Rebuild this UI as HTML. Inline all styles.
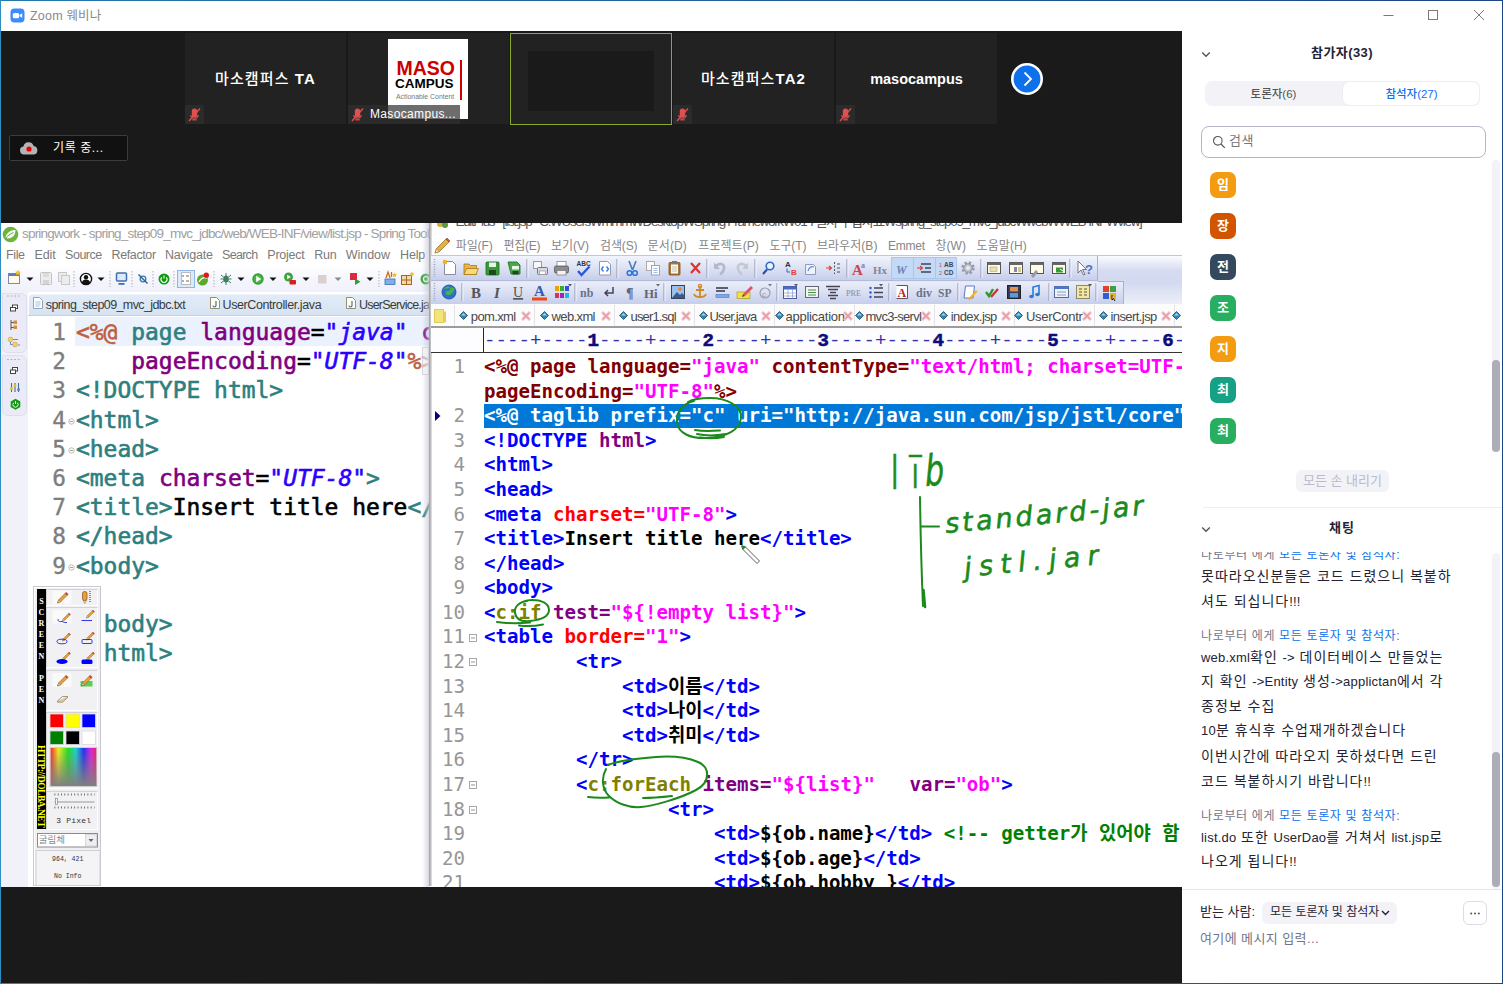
<!DOCTYPE html>
<html lang="ko">
<head>
<meta charset="utf-8">
<title>Zoom 웨비나</title>
<style>
*{box-sizing:border-box;margin:0;padding:0}
html,body{width:1503px;height:984px;overflow:hidden;background:#fff}
body{position:relative;font-family:"Liberation Sans","Noto Sans CJK KR",sans-serif;color:#232333}
.abs{position:absolute}
.nw{white-space:nowrap}
#win{position:absolute;left:0;top:0;width:1503px;height:984px;background:#fff;overflow:hidden}
#bt{position:absolute;left:0;top:0;width:1503px;height:1px;background:linear-gradient(90deg,#2378b0,#1c4585);z-index:50}
#bl{position:absolute;left:0;top:0;width:1px;height:984px;background:#2e8ec4;z-index:50}
#br{position:absolute;left:1502px;top:0;width:1px;height:984px;background:#1c4585;z-index:50}
#bb{position:absolute;left:0;top:983px;width:1503px;height:1px;background:linear-gradient(90deg,#2a88b8,#1c4a86);z-index:50}
#title{position:absolute;left:1px;top:1px;width:1501px;height:30px;background:#fff}
#title .t{position:absolute;left:29px;top:5.700px;font-size:12.5px;line-height:18px;color:#8a8a8a;white-space:nowrap;letter-spacing:.2px}
#main{position:absolute;left:1px;top:31px;width:1181px;height:953px;background:#1a1a1a;overflow:hidden}
.tile{position:absolute;top:2px;height:91px;width:161px;background:#222222;overflow:hidden}
.tile .nm .k{font-weight:500}
.tile .nm{position:absolute;left:0;right:0;top:35px;text-align:center;color:#fff;font-weight:bold;font-size:15px;line-height:22px;white-space:nowrap}
.mute{position:absolute;left:0;bottom:0;width:19px;height:19px}

#side{position:absolute;left:1182px;top:31px;width:320px;height:952px;background:#fff;overflow:hidden}
#side .hd{position:absolute;left:0;width:320px;text-align:center;font-weight:bold;font-size:13px;line-height:18px;color:#232333;white-space:nowrap;letter-spacing:.4px}
.seg{position:absolute;left:23px;top:50px;width:275px;height:25px;background:#f2f2f7;border-radius:7px}
.seg .on{position:absolute;left:138px;top:1px;width:136px;height:23px;background:#fff;border-radius:6px;box-shadow:0 0 2px rgba(0,0,0,.08)}
.seg span{position:absolute;top:5px;font-weight:500;width:137px;text-align:center;font-size:11.500px;line-height:17px;white-space:nowrap}
.srch{position:absolute;left:19px;top:95px;width:285px;height:32px;border:1px solid #b4b4c6;border-radius:8px;background:#fff}
.av{position:absolute;left:28px;margin-top:-.3px;width:26px;height:26px;border-radius:7px;color:#fff;font-weight:bold;font-size:13px;line-height:25px;text-align:center}
.chat{position:absolute;left:19px;font-size:13px;line-height:25px;color:#232333;white-space:nowrap;word-spacing:.9px;letter-spacing:.2px}
.chat i{font-style:normal;font-size:14px;letter-spacing:1px;word-spacing:0}
.chat.h{font-size:12px;color:#747487;letter-spacing:.65px;word-spacing:0;margin-top:2.500px}
.chat.h b{font-weight:normal;color:#0e71eb}

#share{position:absolute;left:1px;top:222.600px;width:1181px;height:664.200px;overflow:hidden;background:#fff}
#sw{position:absolute;left:-1px;top:-222.600px;width:1503px;height:984px}
#ecl{position:absolute;left:1px;top:222px;width:429px;height:666px;background:#fff;overflow:hidden}
#eclw{position:absolute;left:-1px;top:-222px;width:1503px;height:984px;font-family:"Liberation Sans",sans-serif}
.etitle{position:absolute;left:22px;top:225px;font-size:13.500px;line-height:18px;color:#a0a0a0;white-space:nowrap;letter-spacing:-.35px}
.emenu{position:absolute;top:246px;font-size:12.500px;line-height:18px;color:#7a7a7a;white-space:nowrap;letter-spacing:-.3px}
.etab{position:absolute;top:296px;font-size:12.500px;line-height:18px;color:#3a3a3a;white-space:nowrap;letter-spacing:-.45px}
.ecode{position:absolute;left:76px;font-family:"DejaVu Sans Mono","Liberation Mono",monospace;font-size:22.950px;line-height:29px;white-space:pre;color:#000;-webkit-text-stroke:.6px}
.eln{position:absolute;left:27px;width:39px;-webkit-text-stroke:.35px;text-align:right;font-family:"DejaVu Sans Mono","Liberation Mono",monospace;font-size:22.750px;line-height:29px;color:#7d7d7d}
.ecode .d{color:#bf5f3f}.ecode .t{color:#2e7f80}.ecode .a{color:#7f007f}.ecode .s{color:#2a00ff;font-style:italic}

#pen{position:absolute;left:32.700px;top:586px;width:68px;height:300px;background:#f0eff1;border:1px solid #c9c9cf;box-shadow:inset 1px 1px 0 #fff}
#pen .v{position:absolute;left:3px;width:9.500px;text-align:center;font-family:"Liberation Serif",serif;font-weight:bold;font-size:8px;line-height:10px;color:#fff}
#pen .sec{position:absolute;left:12.500px;width:52px;border:1px solid #d2d2d8;border-right-color:#fff;border-bottom-color:#fff;background:#f1f0f2}
#pen .tiny{position:absolute;font-family:"Liberation Mono",monospace;font-size:7px;line-height:9px;color:#333;white-space:nowrap;text-align:center}

#ep{position:absolute;left:429px;top:222px;width:753px;height:666px;background:#fff;overflow:hidden}
#epw{position:absolute;left:-429px;top:-222px;width:1503px;height:984px;font-family:"Liberation Sans","Noto Sans CJK KR",sans-serif}
.pmenu{position:absolute;top:237.200px;font-size:12px;line-height:18px;color:#868686;white-space:nowrap}
.ptab{position:absolute;top:307.800px;font-size:13px;line-height:18px;color:#484848;white-space:nowrap;letter-spacing:-.35px}
.pcode{position:absolute;left:484px;font-family:"DejaVu Sans Mono","Liberation Mono","Noto Sans CJK KR",monospace;font-weight:bold;font-size:19.100px;line-height:24px;white-space:pre;color:#000}
.pcode i{font-style:normal;font-family:"Noto Sans CJK KR",sans-serif;font-size:18.750px;letter-spacing:0;line-height:0}
.pln{position:absolute;left:432px;width:33px;text-align:right;font-family:"DejaVu Sans Mono","Liberation Mono",monospace;font-size:19.100px;line-height:24px;color:#969696}
.pcode .j{color:#800000}.pcode .s{color:#ff00ff}.pcode .t{color:#0000ff}.pcode .r{color:#ff0000}.pcode .p{color:#800080}.pcode .o{color:#808000}.pcode .g{color:#008000}
.pcode.sel,.pcode.sel span{color:#fff}
.rul b{color:#0c0c7c;-webkit-text-stroke:.5px}
.tbi{font-family:"Liberation Serif",serif;font-weight:bold;fill:#555}
</style>
</head>
<body>
<div id="win">
<div id="title">
  <svg class="abs" style="left:8.700px;top:6.700px" width="15" height="15" viewBox="0 0 16 16"><rect x="0.500" y="0.500" width="15" height="15" rx="4.200" fill="#3d8bfd"/><rect x="3" y="5.200" width="6.800" height="5.600" rx="1.600" fill="#fff"/><path d="M10.400 7.200 L13 5.600 V10.400 L10.400 8.800Z" fill="#fff"/></svg>
  <div class="t">Zoom 웨비나</div>
  <svg class="abs" style="left:1375px;top:0" width="126" height="30" viewBox="0 0 126 30"><g stroke="#7a7a7a" stroke-width="1" fill="none"><path d="M7.500 14.500H17.500"/><rect x="52.500" y="9.500" width="9" height="9"/><path d="M98 9L108 19M108 9L98 19"/></g></svg>
</div>
<div id="main">
  <div class="tile" style="left:184px"><div class="nm" style="letter-spacing:1.100px"><span class="k">마소캠퍼스</span> TA</div><svg class="mute" width="19" height="19" viewBox="0 0 19 19"><rect width="19" height="19" fill="#2b2b2b"/><rect x="6.800" y="3.500" width="5.400" height="9" rx="2.700" fill="#e0504e"/><path d="M5.6 10.2c.4 2 2 3 3.900 3s3.500-1 3.900-3" stroke="#e0504e" stroke-width="1.100" fill="none"/><rect x="7.200" y="14.200" width="4.600" height="1.200" fill="#e0504e"/><path d="M4 16L15 3.500" stroke="#e0504e" stroke-width="1.300"/></svg></div>
  <div class="tile" style="left:347px">
    <div class="abs" style="left:40px;top:6px;width:80px;height:80px;background:#fff">
      <div class="abs" style="left:8.500px;top:18px;font:bold 19.500px/22px 'Liberation Sans',sans-serif;color:#cc0000;letter-spacing:0">MASO</div>
      <div class="abs" style="left:7px;top:37.300px;font:bold 13.500px/16px 'Liberation Sans',sans-serif;color:#000">CAMPUS</div>
      <div class="abs nw" style="left:8px;top:52.500px;font:6.900px/9px 'Liberation Sans',sans-serif;color:#777">Actionable Content</div>
      <div class="abs" style="left:72px;top:21px;width:2px;height:40px;background:#cc0000"></div>
    </div>
    <div class="abs" style="left:0;top:72px;width:112px;height:19px;background:rgba(47,47,47,.7)"></div>
    <svg class="mute" width="19" height="19" viewBox="0 0 19 19"><rect x="6.800" y="3.500" width="5.400" height="9" rx="2.700" fill="#e0504e"/><path d="M5.6 10.2c.4 2 2 3 3.900 3s3.500-1 3.900-3" stroke="#e0504e" stroke-width="1.100" fill="none"/><rect x="7.200" y="14.200" width="4.600" height="1.200" fill="#e0504e"/><path d="M4 16L15 3.500" stroke="#e0504e" stroke-width="1.300"/></svg>
    <div class="abs nw" style="left:22px;top:74px;font-size:12px;line-height:15px;color:#fff;letter-spacing:.35px">Masocampus...</div>
  </div>
  <div class="tile" style="left:509px;width:162px;height:92px;top:2px;border:1px solid #8aa82f"><div class="abs" style="left:17px;top:17px;width:126px;height:60px;background:#1a1a1a"></div></div>
  <div class="tile" style="left:672px"><div class="nm" style="letter-spacing:1.100px"><span class="k">마소캠퍼스</span>TA2</div><svg class="mute" width="19" height="19" viewBox="0 0 19 19"><rect width="19" height="19" fill="#2b2b2b"/><rect x="6.800" y="3.500" width="5.400" height="9" rx="2.700" fill="#e0504e"/><path d="M5.6 10.2c.4 2 2 3 3.900 3s3.500-1 3.900-3" stroke="#e0504e" stroke-width="1.100" fill="none"/><rect x="7.200" y="14.200" width="4.600" height="1.200" fill="#e0504e"/><path d="M4 16L15 3.500" stroke="#e0504e" stroke-width="1.300"/></svg></div>
  <div class="tile" style="left:835px"><div class="nm" style="font-size:14.500px">masocampus</div><svg class="mute" width="19" height="19" viewBox="0 0 19 19"><rect width="19" height="19" fill="#2b2b2b"/><rect x="6.800" y="3.500" width="5.400" height="9" rx="2.700" fill="#e0504e"/><path d="M5.6 10.2c.4 2 2 3 3.900 3s3.500-1 3.900-3" stroke="#e0504e" stroke-width="1.100" fill="none"/><rect x="7.200" y="14.200" width="4.600" height="1.200" fill="#e0504e"/><path d="M4 16L15 3.500" stroke="#e0504e" stroke-width="1.300"/></svg></div>
  <svg class="abs" style="left:1009px;top:30.700px" width="34" height="34" viewBox="0 0 34 34"><circle cx="17" cy="17" r="14.700" fill="#0e71eb" stroke="#fff" stroke-width="2.600"/><path d="M14.500 10.500L21 17L14.500 23.500" stroke="#fff" stroke-width="1.800" fill="none"/></svg>
  <div class="abs" style="left:8px;top:104px;width:119px;height:26px;border:1px solid #3c3c3c;border-radius:2px;background:#111">
    <svg class="abs" style="left:9px;top:4px" width="20" height="16" viewBox="0 0 20 16"><path d="M5 14.500a4 4 0 0 1-.6-7.950a5.300 5.300 0 0 1 10.300-.5a4.300 4.300 0 0 1 .3 8.450z" fill="#b4b4b4"/><circle cx="10" cy="9" r="2.600" fill="#e00"/></svg>
    <div class="abs nw" style="left:43px;top:4px;font-size:12px;line-height:16px;color:#fff;letter-spacing:.6px">기록 중...</div>
  </div>
</div>
<div id="share"><div id="sw">
<div id="ecl"><div id="eclw">
<svg class="abs" style="left:2px;top:226px" width="18" height="17" viewBox="0 0 18 17"><circle cx="8.500" cy="8.500" r="7.800" fill="#6db33f"/><path d="M3.500 11.500c1-5 5-7.500 10-7.500c0 4.500-2.500 8.500-8 8.500" fill="#fff" opacity=".92"/><path d="M3 13c2.500-3 5-5 8.500-6.500" stroke="#6db33f" stroke-width="1" fill="none"/></svg><div class="etitle" style="letter-spacing:-0.802px">springwork - spring_step09_mvc_jdbc/web/WEB-INF/view/list.jsp - Spring Tool Suite 4</div>
<div class="emenu" style="left:6.1px;letter-spacing:-0.389px">File</div><div class="emenu" style="left:34.5px;letter-spacing:-0.087px">Edit</div><div class="emenu" style="left:65.1px;letter-spacing:-0.502px">Source</div><div class="emenu" style="left:111.5px;letter-spacing:-0.381px">Refactor</div><div class="emenu" style="left:165.0px;letter-spacing:-0.205px">Navigate</div><div class="emenu" style="left:222.0px;letter-spacing:-0.702px">Search</div><div class="emenu" style="left:267.3px;letter-spacing:-0.229px">Project</div><div class="emenu" style="left:314.2px;letter-spacing:-0.146px">Run</div><div class="emenu" style="left:345.8px;letter-spacing:-0.045px">Window</div><div class="emenu" style="left:400.0px;letter-spacing:-0.130px">Help</div>
<div class="abs" style="left:1px;top:265px;width:429px;height:27px;background:linear-gradient(#ffffff,#f4f5fc 60%,#eff0fa)"></div>
<svg class="abs" style="left:0;top:267px" width="430" height="26" viewBox="0 266 430 26"><rect x="8.500" y="272.500" width="11" height="10" fill="#fffbe8" stroke="#7a8aa8"/><rect x="8.500" y="272.500" width="11" height="2.500" fill="#5a7fc0"/><path d="M18 268.500l1 2 2 .3-1.500 1.400.4 2-1.900-1-1.900 1 .4-2-1.500-1.400 2-.3z" fill="#f5c518"/><path d="M26.5 276.5h7l-3.500 3.500z" fill="#111"/><rect x="40.500" y="271.500" width="11" height="12" rx="1" fill="#ececec" stroke="#c4c4c4"/><rect x="43" y="272" width="6" height="4" fill="#dcdcdc"/><rect x="43" y="279" width="6" height="4" fill="#d4d4d4"/><rect x="58.500" y="271.500" width="8" height="9" fill="#ececec" stroke="#c8c8c8"/><rect x="61.500" y="274.500" width="8" height="9" fill="#ececec" stroke="#c8c8c8"/><path d="M74.0 270v16" stroke="#b8bcc8" stroke-width="1.200" stroke-dasharray="1.500 1.500"/><circle cx="86" cy="278" r="5.600" fill="#fff" stroke="#111" stroke-width="1.400"/><circle cx="86" cy="276.300" r="2.200" fill="#111"/><path d="M81.800 281.800a4.300 4.300 0 0 1 8.400 0a5.600 5.600 0 0 1-8.400 0z" fill="#111"/><path d="M97.5 276.5h7l-3.500 3.500z" fill="#111"/><path d="M110.0 270v16" stroke="#b8bcc8" stroke-width="1.200" stroke-dasharray="1.500 1.500"/><rect x="116.500" y="272" width="10" height="8" rx="1" fill="#dfe9f7" stroke="#3f6fb0" stroke-width="1.500"/><rect x="118.500" y="282" width="6" height="1.800" fill="#3f6fb0"/><path d="M132.0 270v16" stroke="#b8bcc8" stroke-width="1.200" stroke-dasharray="1.500 1.500"/><circle cx="143" cy="278" r="2.800" fill="none" stroke="#3a7ab0" stroke-width="1.300"/><path d="M138.500 273.500l9 9" stroke="#2d6290" stroke-width="1.400"/><path d="M153.0 270v16" stroke="#b8bcc8" stroke-width="1.200" stroke-dasharray="1.500 1.500"/><circle cx="164" cy="278" r="5.500" fill="#119a11"/><path d="M161.800 276.300a3 3 0 1 0 4.400 0M164 274.500v3" stroke="#e8ffe8" stroke-width="1.100" fill="none"/><path d="M174.0 270v16" stroke="#b8bcc8" stroke-width="1.200" stroke-dasharray="1.500 1.500"/><rect x="177.500" y="269.500" width="17" height="17" fill="#dbe9fb" stroke="#8fb6ea"/><rect x="181.500" y="271.500" width="9" height="12" fill="#fff" stroke="#bbb"/><path d="M183 274v2M183 279v2M186 275h3M186 280h3" stroke="#555" stroke-width=".9"/><circle cx="202.500" cy="279" r="5.500" fill="#5aa82c"/><path d="M199 281c2-4 5-5 8-4" stroke="#fff" stroke-width="1.400" fill="none"/><circle cx="206.300" cy="274.300" r="2.700" fill="#e01818"/><path d="M214.0 270v16" stroke="#b8bcc8" stroke-width="1.200" stroke-dasharray="1.500 1.500"/><ellipse cx="226" cy="278" rx="2.600" ry="3.600" fill="#3f7f5f"/><path d="M221 274l10 8M231 274l-10 8M220.500 278h11M226 272v12" stroke="#3f7f5f" stroke-width="1"/><path d="M237.5 276.5h7l-3.500 3.500z" fill="#111"/><circle cx="258" cy="278" r="5.700" fill="#2c9a2c"/><circle cx="258" cy="278" r="4.600" fill="#46b546"/><path d="M256.200 274.800l5 3.200-5 3.200z" fill="#fff"/><path d="M269.5 276.5h7l-3.500 3.500z" fill="#111"/><circle cx="288.500" cy="276" r="4.500" fill="#3da53d"/><path d="M287.200 273.800l3.600 2.200-3.600 2.200z" fill="#fff"/><rect x="289.500" y="279" width="6.500" height="4.500" rx="1" fill="#d81e1e"/><path d="M302.5 276.5h7l-3.500 3.500z" fill="#111"/><rect x="318" y="274" width="8.500" height="8.500" fill="#dccfd2"/><path d="M334.5 276.5h7l-3.500 3.500z" fill="#8a8a8a"/><rect x="350" y="272" width="7" height="7" fill="#dc2a3c"/><path d="M355 277.500l5.500 3.200-5.500 3.200z" fill="#2aa12a"/><path d="M366.5 276.5h7l-3.500 3.500z" fill="#111"/><path d="M379.0 270v16" stroke="#b8bcc8" stroke-width="1.200" stroke-dasharray="1.500 1.500"/><rect x="385" y="278" width="10" height="5.500" fill="#7fb0e8" stroke="#3a6eb0" stroke-width=".8"/><path d="M386 277l2-6 2 6M391.500 271v5" stroke="#d26a1a" stroke-width="1.300" fill="none"/><path d="M394.500 271.500l.8 1.600 1.700.2-1.200 1.200.3 1.700-1.600-.8-1.600.8.300-1.700-1.200-1.200 1.700-.2z" fill="#f0c020"/><rect x="401.500" y="274.500" width="10" height="9" fill="#f1d9a8" stroke="#a8651e"/><path d="M401.500 279h10M406.500 274.500v9" stroke="#a8651e"/><path d="M412 270.500l.8 1.600 1.700.2-1.200 1.200.3 1.700-1.600-.8-1.600.8.300-1.700-1.200-1.200 1.700-.2z" fill="#f0c020"/><circle cx="426" cy="278" r="5.500" fill="#3faa3f"/><circle cx="426" cy="278" r="2.500" fill="none" stroke="#fff" stroke-width="1.200"/></svg>
<div class="abs" style="left:1px;top:291px;width:27px;height:596px;background:#f1f1fa"></div><div class="abs" style="left:2px;top:292.700px;width:24.500px;height:60.500px;background:#ebebf7;border:1px solid #dedeee;border-radius:0 6px 6px 6px"></div><div class="abs" style="left:2px;top:355px;width:24.500px;height:61px;background:#ebebf7;border:1px solid #dedeee;border-radius:0 6px 6px 6px"></div><svg class="abs" style="left:2px;top:292px" width="25" height="125" viewBox="2 292 25 125"><path d="M7 296.0h14" stroke="#b0b0bc" stroke-width="1.200" stroke-dasharray="1.800 1.800"/><path d="M7 359.5h14" stroke="#b0b0bc" stroke-width="1.200" stroke-dasharray="1.800 1.800"/><rect x="12.500" y="305.0" width="5" height="3.500" fill="#fff" stroke="#444" stroke-width="1"/><rect x="10.500" y="307.5" width="5" height="3.500" fill="#fff" stroke="#444" stroke-width="1"/><rect x="12.500" y="367.5" width="5" height="3.500" fill="#fff" stroke="#444" stroke-width="1"/><rect x="10.500" y="370.0" width="5" height="3.500" fill="#fff" stroke="#444" stroke-width="1"/><path d="M11 320v10M11 322.500h3M11 327.500h3" stroke="#555" stroke-width="1"/><rect x="13.500" y="320.500" width="3.500" height="3.500" fill="#d88a3a"/><rect x="13.500" y="325.500" width="3.500" height="3.500" fill="#d88a3a"/><circle cx="10.500" cy="339.500" r="2.400" fill="#f0d070" stroke="#c8a030" stroke-width=".6"/><circle cx="15" cy="344.500" r="2.400" fill="#f0d070" stroke="#c8a030" stroke-width=".6"/><path d="M13 339.500h5M18 345h2M10.500 342v2.500h2" stroke="#5a7fc0" stroke-width=".9" fill="none"/><path d="M11.500 383v9M15 383v9M18.500 383v9" stroke="#3a6ea5" stroke-width="1.100"/><circle cx="11.500" cy="388.500" r="1.500" fill="#e8b830"/><circle cx="15" cy="385.500" r="1.500" fill="#e8b830"/><circle cx="18.500" cy="389.500" r="1.500" fill="#4a8ad0"/><path d="M15.500 398.800l4.800 2.700v5.500l-4.800 2.700-4.800-2.700v-5.500z" fill="#129a12"/><path d="M13.700 402.700a2.600 2.600 0 1 0 3.600 0M15.500 401v3" stroke="#dfffdf" stroke-width="1" fill="none"/></svg>
<div class="abs" style="left:28.500px;top:293.500px;width:402px;height:21.500px;background:linear-gradient(#e2ecf7,#d6e3f2);border-top:1px solid #eef3fa;border-radius:4px 0 0 0"></div><div class="abs" style="left:28px;top:314.500px;width:402px;height:1px;background:#c4d2e4"></div><svg class="abs" style="left:33px;top:297px" width="10" height="12" viewBox="0 0 10 12"><path d="M.5.5h6l3 3v8h-9z" fill="#fafcff" stroke="#8a9ab8" stroke-width=".9"/><path d="M2.500 5h5M2.500 7h5M2.500 9h4" stroke="#9ab0d0" stroke-width=".8"/></svg><div class="etab" style="left:45.8px;letter-spacing:-0.602px">spring_step09_mvc_jdbc.txt</div><svg class="abs" style="left:209.5px;top:297px" width="10" height="12" viewBox="0 0 10 12"><path d="M.5.5h6l3 3v8h-9z" fill="#fffef2" stroke="#8a8460" stroke-width=".9"/><path d="M6 4v4.500a1.500 1.500 0 0 1-3 0" stroke="#3a5ea8" stroke-width="1.100" fill="none"/></svg><svg class="abs" style="left:345.5px;top:297px" width="10" height="12" viewBox="0 0 10 12"><path d="M.5.5h6l3 3v8h-9z" fill="#fffef2" stroke="#8a8460" stroke-width=".9"/><path d="M6 4v4.500a1.500 1.500 0 0 1-3 0" stroke="#3a5ea8" stroke-width="1.100" fill="none"/></svg><div class="etab" style="left:222.5px;letter-spacing:-0.400px">UserController.java</div><div class="etab" style="left:359.0px;letter-spacing:-0.792px">UserService.java</div>
<div class="abs" style="left:75px;top:317px;width:355px;height:28.500px;background:#ecf2fd"></div><div class="eln" style="top:317.50px">1</div><div class="ecode" style="top:317.50px"><span class="d">&lt;%@</span> <span class="t">page</span> <span class="a">language</span>=<span class="s">"java"</span> <span class="a">contentType</span></div><div class="eln" style="top:346.50px">2</div><div class="ecode" style="top:346.50px">    <span class="a">pageEncoding</span>=<span class="s">"UTF-8"</span><span class="d">%&gt;</span></div><div class="eln" style="top:375.50px">3</div><div class="ecode" style="top:375.50px"><span class="t">&lt;!DOCTYPE html&gt;</span></div><div class="eln" style="top:405.50px">4</div><div class="ecode" style="top:405.50px"><span class="t">&lt;html&gt;</span></div><div class="eln" style="top:434.50px">5</div><div class="ecode" style="top:434.50px"><span class="t">&lt;head&gt;</span></div><div class="eln" style="top:463.50px">6</div><div class="ecode" style="top:463.50px"><span class="t">&lt;meta</span> <span class="a">charset</span>=<span class="s">"UTF-8"</span><span class="t">&gt;</span></div><div class="eln" style="top:492.50px">7</div><div class="ecode" style="top:492.50px"><span class="t">&lt;title&gt;</span>Insert title here<span class="t">&lt;/title&gt;</span></div><div class="eln" style="top:521.50px">8</div><div class="ecode" style="top:521.50px"><span class="t">&lt;/head&gt;</span></div><div class="eln" style="top:551.50px">9</div><div class="ecode" style="top:551.50px"><span class="t">&lt;body&gt;</span></div><div class="ecode" style="top:609.50px"><span class="t"><span style="visibility:hidden">&lt;/</span>body&gt;</span></div><div class="ecode" style="top:638.50px"><span class="t"><span style="visibility:hidden">&lt;/</span>html&gt;</span></div><svg class="abs" style="left:68px;top:418.1px" width="7" height="7" viewBox="0 0 7 7"><circle cx="3.500" cy="3.500" r="2.700" fill="#fff" stroke="#a8a8a8" stroke-width=".8"/><path d="M2 3.500h3" stroke="#888" stroke-width=".8"/></svg><svg class="abs" style="left:68px;top:447.3px" width="7" height="7" viewBox="0 0 7 7"><circle cx="3.500" cy="3.500" r="2.700" fill="#fff" stroke="#a8a8a8" stroke-width=".8"/><path d="M2 3.500h3" stroke="#888" stroke-width=".8"/></svg><svg class="abs" style="left:68px;top:564.1px" width="7" height="7" viewBox="0 0 7 7"><circle cx="3.500" cy="3.500" r="2.700" fill="#fff" stroke="#a8a8a8" stroke-width=".8"/><path d="M2 3.500h3" stroke="#888" stroke-width=".8"/></svg>
<div class="abs" style="left:421.500px;top:222px;width:8px;height:666px;background:linear-gradient(90deg,rgba(205,205,225,0),rgba(196,196,216,.75))"></div><div class="abs" style="left:421.500px;top:346.500px;width:7.500px;height:28px;background:rgba(242,242,246,.55);border:1px solid rgba(200,200,214,.7)"></div></div></div>
<div id="ep"><div id="epw">
<div class="abs" style="left:429px;top:223px;width:2.500px;height:663px;background:linear-gradient(90deg,#9a9a9a,#c8c8c8 60%,#e4e4e4)"></div><div class="abs nw" style="left:455.500px;top:212.500px;font-size:13.500px;line-height:18px;color:#555;letter-spacing:-1.347px">EditPlus - [list.jsp - C:₩Users₩mmm₩Desktop₩Spring Framework₩01 7일차 수업자료₩spring_step09_mvc_jdbc₩web₩WEB-INF₩view]</div><svg class="abs" style="left:436px;top:222px" width="14" height="8" viewBox="0 0 14 8"><circle cx="4" cy="2" r="3" fill="#d8b030"/><circle cx="9" cy="3" r="3" fill="#5a9a3a"/></svg><svg class="abs" style="left:433px;top:237px" width="18" height="18" viewBox="0 0 18 18"><path d="M2 16l1.500-4.500 9.500-9.500 3 3-9.500 9.500z" fill="#e8b040" stroke="#8a6a20" stroke-width=".7"/><path d="M2 16l1.500-4.500 3 3z" fill="#f4dcb0" stroke="#8a6a20" stroke-width=".5"/><path d="M13 2l1-1 3 3-1 1z" fill="#d05050" stroke="#803030" stroke-width=".5"/></svg><div class="pmenu" style="left:455.8px;letter-spacing:-0.141px">파일(F)</div><div class="pmenu" style="left:503.5px;letter-spacing:-0.296px">편집(E)</div><div class="pmenu" style="left:550.9px;letter-spacing:0.024px">보기(V)</div><div class="pmenu" style="left:600.1px;letter-spacing:-0.176px">검색(S)</div><div class="pmenu" style="left:647.5px;letter-spacing:0.150px">문서(D)</div><div class="pmenu" style="left:698.3px;letter-spacing:0.047px">프로젝트(P)</div><div class="pmenu" style="left:769.5px;letter-spacing:-0.121px">도구(T)</div><div class="pmenu" style="left:816.9px;letter-spacing:0.061px">브라우저(B)</div><div class="pmenu" style="left:888.0px;letter-spacing:-0.223px">Emmet</div><div class="pmenu" style="left:935.5px;letter-spacing:0.010px">창(W)</div><div class="pmenu" style="left:976.5px;letter-spacing:0.103px">도움말(H)</div>
<div class="abs" style="left:431px;top:256px;width:751px;height:48px;background:linear-gradient(#fbfcff 0%,#d6dbf1 30%,#d3d9f0 55%,#eceff9 100%)"></div><div class="abs" style="left:431px;top:256px;width:667px;height:25px;background:linear-gradient(#f1f4fc,#dfe4f5 45%,#c6ceeb);border-right:1px solid #a9b1d2;border-bottom:1px solid #b4bbd8"></div><div class="abs" style="left:431px;top:281px;width:693px;height:23px;background:linear-gradient(#e9edf9,#dbe0f4 45%,#c6ceeb);border-right:1px solid #a9b1d2;border-top:1px solid #e4e8f6"></div><div class="abs" style="left:1098px;top:280.500px;width:26px;height:1px;background:#a9b1d2"></div><div class="abs" style="left:431px;top:255.300px;width:751px;height:1px;background:#c4c6d0"></div><div class="abs" style="left:431px;top:303.500px;width:751px;height:1px;background:#b9bdd0"></div><svg class="abs" style="left:431px;top:256px" width="751" height="48" viewBox="431 256 751 48"><path d="M434.500 259v18M434.500 283v18" stroke="#9aa0bc" stroke-width="1.500" stroke-dasharray="1 1.500"/><path d="M444.500 261.500h8l3 3v10h-11z" fill="#fff" stroke="#8a8a9a"/><circle cx="445" cy="262" r="2.300" fill="#f5b020"/><path d="M464 264h5l1.500 1.500h6v9h-12.500z" fill="#e8b54a" stroke="#a87818" stroke-width=".8"/><path d="M464 274.500l2.500-6h12l-2.500 6z" fill="#f8d878" stroke="#a87818" stroke-width=".8"/><rect x="486" y="262" width="13" height="13" rx="1" fill="#3a9a3a" stroke="#1f6a1f" stroke-width=".8"/><rect x="489" y="262.500" width="7" height="4.500" fill="#e8f4e8"/><rect x="489" y="270" width="7" height="5" fill="#1c4a1c"/><path d="M508 262h9l3 3v9h-9z" fill="#4aa84a" stroke="#1f6a1f" stroke-width=".8"/><rect x="512" y="266" width="7" height="3.500" fill="#e8f4e8"/><rect x="512.500" y="271" width="6" height="3.500" fill="#1c4a1c"/><path d="M527.0 259.0V278.0" stroke="#8d93ad" stroke-width="1"/><path d="M528.0 259.0V278.0" stroke="#f4f6ff" stroke-width="1"/><rect x="533.500" y="261.500" width="8" height="7" fill="#f8f8f8" stroke="#9a9aa8"/><rect x="537.500" y="267.500" width="10" height="7" rx="1" fill="#d8d8e0" stroke="#777"/><rect x="539.500" y="271" width="6" height="3.500" fill="#fff" stroke="#888" stroke-width=".6"/><rect x="557" y="261.500" width="9" height="5" fill="#fff" stroke="#888" stroke-width=".8"/><rect x="554.500" y="266" width="14" height="7" rx="1.500" fill="#8a8a92" stroke="#555" stroke-width=".8"/><rect x="557" y="270.500" width="9" height="4.500" fill="#f4f4f4" stroke="#777" stroke-width=".7"/><path d="M578 271l3.500 4 8-8.500" stroke="#2a5ad8" stroke-width="2.400" fill="none"/><text x="576.500" y="266" font-size="6.500" font-family="Liberation Sans" font-weight="bold" fill="#334">ABC</text><path d="M599.500 261.500h8l3 3v10.500h-11z" fill="#fff" stroke="#9a9aaa"/><path d="M603.500 266.500l-2 2.500 2 2.500M606.500 266.500l2 2.500-2 2.500" stroke="#2a7ae0" stroke-width="1.300" fill="none"/><path d="M617.0 259.0V278.0" stroke="#8d93ad" stroke-width="1"/><path d="M618.0 259.0V278.0" stroke="#f4f6ff" stroke-width="1"/><path d="M629 261l3.500 9M636 261l-3.500 9" stroke="#4a7ac0" stroke-width="1.600"/><circle cx="629.500" cy="273" r="2.300" fill="none" stroke="#2a78d8" stroke-width="1.600"/><circle cx="635" cy="273" r="2.300" fill="none" stroke="#2a78d8" stroke-width="1.600"/><rect x="646.500" y="261.500" width="8" height="9" fill="#fafafa" stroke="#aaa"/><rect x="651.500" y="265.500" width="8" height="9.500" fill="#fafcff" stroke="#9aa"/><path d="M653.500 268.500h4M653.500 270.500h4M653.500 272.500h4" stroke="#7aa0d8" stroke-width=".7"/><rect x="669" y="262.500" width="11" height="12.500" rx="1" fill="#b07838" stroke="#7a4a18" stroke-width=".8"/><rect x="671" y="264.500" width="7" height="9" fill="#fbfbf0"/><rect x="672" y="261" width="5" height="2.500" fill="#777"/><path d="M672 267h5M672 269h5M672 271h5" stroke="#9a9a8a" stroke-width=".6"/><path d="M691 263l9 10M700 263l-9 10" stroke="#e03030" stroke-width="2.200"/><path d="M707.0 259.0V278.0" stroke="#8d93ad" stroke-width="1"/><path d="M708.0 259.0V278.0" stroke="#f4f6ff" stroke-width="1"/><path d="M716 266c4-4 9-2 8 3c-.5 2.500-2 4-4 5.500" stroke="#b4b8c8" stroke-width="2.600" fill="none"/><path d="M714 262.500v6.500h6z" fill="#b4b8c8"/><path d="M746 266c-4-4-9-2-8 3c.5 2.500 2 4 4 5.500" stroke="#c4c8d4" stroke-width="2.600" fill="none"/><path d="M748 262.500v6.500h-6z" fill="#c4c8d4"/><path d="M755.0 259.0V278.0" stroke="#8d93ad" stroke-width="1"/><path d="M756.0 259.0V278.0" stroke="#f4f6ff" stroke-width="1"/><circle cx="770" cy="266" r="3.800" fill="#eaf3ff" stroke="#2a6ac8" stroke-width="1.600"/><path d="M767 269.500l-4 4.500" stroke="#2a4a98" stroke-width="2"/><text x="785" y="267" font-size="8" font-family="Liberation Sans" font-weight="bold" fill="#333">A</text><text x="791" y="275" font-size="8" font-family="Liberation Sans" font-weight="bold" fill="#e04030">B</text><path d="M787 268.500v3.500h3" stroke="#2a6ac8" stroke-width="1" fill="none"/><path d="M805.500 264.500h8l2 2v8h-10z" fill="#eef2fb" stroke="#8a9ac0"/><path d="M808 271c1-4 4-5 6-4" stroke="#6a8ad0" stroke-width="1.200" fill="none"/><path d="M826 268h5M829 266l2.500 2-2.500 2" stroke="#e04030" stroke-width="1.200" fill="none"/><path d="M834.500 262v12" stroke="#555" stroke-width="1" stroke-dasharray="2 1.500"/><path d="M837 264h3M837 268h3M837 272h3" stroke="#555" stroke-width="1"/><path d="M847.0 259.0V278.0" stroke="#8d93ad" stroke-width="1"/><path d="M848.0 259.0V278.0" stroke="#f4f6ff" stroke-width="1"/><text x="852" y="275" font-size="15" class="tbi" style="fill:#c84858">A</text><text x="861" y="268" font-size="8" class="tbi" style="fill:#8a7ab8">a</text><text x="873" y="274" font-size="11" class="tbi" style="fill:#8088a0">Hx</text><rect x="891.500" y="257.500" width="65" height="21" fill="#c3d9f6" stroke="#a9c6ee"/><path d="M913.500 258v20M935.500 258v20" stroke="#a9c6ee"/><text x="896" y="274" font-size="12" class="tbi" style="fill:#6a82b8;font-style:italic">W</text><path d="M921 264h10M925 268h6M921 272h10" stroke="#445" stroke-width="1.300"/><path d="M917 268h5M920 266l2.500 2-2.500 2" stroke="#e04030" stroke-width="1.100" fill="none"/><text x="944" y="267" font-size="6.500" font-family="Liberation Sans" font-weight="bold" fill="#445">AB</text><text x="944" y="274.500" font-size="6.500" font-family="Liberation Sans" font-weight="bold" fill="#445">CD</text><text x="939" y="267" font-size="5.500" font-family="Liberation Sans" fill="#e04030">1</text><text x="939" y="274.500" font-size="5.500" font-family="Liberation Sans" fill="#e04030">2</text><circle cx="968" cy="268" r="5.200" fill="none" stroke="#9a9eac" stroke-width="3" stroke-dasharray="2.300 1.800"/><circle cx="968" cy="268" r="4.200" fill="#c4c8d2" stroke="#8a8e9c" stroke-width="1"/><circle cx="968" cy="268" r="1.800" fill="#eef0f6"/><path d="M981.0 259.0V278.0" stroke="#8d93ad" stroke-width="1"/><path d="M982.0 259.0V278.0" stroke="#f4f6ff" stroke-width="1"/><rect x="987.500" y="262.500" width="13" height="11" fill="#fffbe6" stroke="#555" stroke-width="1"/><rect x="987.500" y="262.500" width="13" height="2.500" fill="#666"/><rect x="1009.500" y="262.500" width="13" height="11" fill="#fffbe6" stroke="#555" stroke-width="1"/><rect x="1009.500" y="262.500" width="13" height="2.500" fill="#666"/><rect x="1030.500" y="262.500" width="13" height="11" fill="#fffbe6" stroke="#555" stroke-width="1"/><rect x="1030.500" y="262.500" width="13" height="2.500" fill="#666"/><rect x="1052.500" y="262.500" width="13" height="11" fill="#fffbe6" stroke="#555" stroke-width="1"/><rect x="1052.500" y="262.500" width="13" height="2.500" fill="#666"/><rect x="990" y="267" width="7" height="4.500" fill="#e8e0b0" stroke="#998" stroke-width=".5"/><rect x="1014" y="267" width="3" height="5" fill="#88a" /><rect x="1018" y="267" width="3" height="5" fill="#cc8"/><path d="M1032 277l5-6" stroke="#99a" stroke-width="3"/><rect x="1056" y="267.500" width="7" height="5" fill="#3a9a3a"/><path d="M1060 269l3 2" stroke="#fff" stroke-width="1"/><path d="M1070.0 259.0V278.0" stroke="#8d93ad" stroke-width="1"/><path d="M1071.0 259.0V278.0" stroke="#f4f6ff" stroke-width="1"/><path d="M1078 261v12l3-3 2.500 5 1.500-.8-2.500-4.700h4z" fill="#fff" stroke="#556" stroke-width=".8"/><text x="1085" y="274" font-size="13" font-family="Liberation Sans" font-weight="bold" fill="#4a72c8">?</text><circle cx="449" cy="292" r="7" fill="#2a72d0"/><path d="M444 289c2-3 5-3 6-1s-1 3-3 3-2 3 0 4 5-1 6-3 2-3 2-5" fill="#4ab04a"/><circle cx="449" cy="292" r="7" fill="none" stroke="#1a4a98" stroke-width=".8"/><path d="M462.0 283.0V301.0" stroke="#8d93ad" stroke-width="1"/><path d="M463.0 283.0V301.0" stroke="#f4f6ff" stroke-width="1"/><text x="471" y="298" font-size="15" class="tbi">B</text><text x="494" y="298" font-size="15" class="tbi" style="font-style:italic">I</text><text x="513" y="297" font-size="14" class="tbi" style="font-weight:normal;text-decoration:underline">U</text><path d="M513 299h10" stroke="#555" stroke-width="1"/><text x="534" y="296" font-size="15" class="tbi" style="fill:#3a5ab0">A</text><rect x="532" y="297.500" width="15" height="3" fill="#f04810"/><rect x="555.0" y="286.0" width="4" height="5" fill="#f0a000"/><rect x="560.0" y="286.0" width="4" height="5" fill="#30b030"/><rect x="565.0" y="286.0" width="4" height="5" fill="#3050e0"/><rect x="555.0" y="293.0" width="4" height="5" fill="#e03060"/><rect x="560.0" y="293.0" width="4" height="5" fill="#a020c0"/><rect x="565.0" y="293.0" width="4" height="5" fill="#20b8e0"/><path d="M568 284h4l-2 2.500z" fill="#556"/><path d="M575.0 283.0V301.0" stroke="#8d93ad" stroke-width="1"/><path d="M576.0 283.0V301.0" stroke="#f4f6ff" stroke-width="1"/><text x="580" y="297" font-size="12" class="tbi" style="fill:#6a7288">nb</text><path d="M613 287v6h-8M608 290l-3 3 3 3" stroke="#445" stroke-width="1.500" fill="none"/><text x="626" y="298" font-size="14" class="tbi" style="fill:#667">¶</text><text x="644" y="298" font-size="13" class="tbi" style="fill:#667">Hi</text><path d="M656 284h4l-2 2.500z" fill="#667"/><path d="M664.0 283.0V301.0" stroke="#8d93ad" stroke-width="1"/><path d="M665.0 283.0V301.0" stroke="#f4f6ff" stroke-width="1"/><rect x="671.500" y="285.500" width="13" height="13" fill="#9ac0ee" stroke="#345" stroke-width="1"/><path d="M672 298l5-6 3 3 2-2 2.500 2.500v2.500z" fill="#3a5a8a"/><circle cx="680" cy="289" r="1.800" fill="#f08030"/><path d="M700 286v11M696 290h8M694 294c1 4 11 4 12 0" stroke="#d08a20" stroke-width="1.800" fill="none"/><circle cx="700" cy="286" r="1.600" fill="none" stroke="#d08a20" stroke-width="1.300"/><path d="M716 288h12M716 291h9" stroke="#334" stroke-width="1.500"/><rect x="716" y="294.500" width="13" height="3" fill="#7aa8e8" stroke="#4a78c0" stroke-width=".6"/><rect x="737" y="292" width="13" height="6.500" fill="#f4e040" stroke="#a89a20" stroke-width=".7"/><path d="M743 294l8-8 2 2-8 8z" fill="#e05070"/><path d="M743 294l-1 3 3-1z" fill="#543"/><circle cx="765" cy="293" r="5" fill="none" stroke="#9a9eac" stroke-width="1.200"/><text x="762" y="296.500" font-size="8" font-family="Liberation Sans" fill="#9a9eac">c</text><path d="M768 284h4l-2 2.500z" fill="#778"/><path d="M777.0 283.0V301.0" stroke="#8d93ad" stroke-width="1"/><path d="M778.0 283.0V301.0" stroke="#f4f6ff" stroke-width="1"/><rect x="783.500" y="286.500" width="13" height="12" fill="#fff" stroke="#4a5a98"/><rect x="783.500" y="286.500" width="13" height="3" fill="#4a6ac8"/><path d="M788 289v9.500M792.500 289v9.500M784 293h12.500M784 296h12.500" stroke="#8a9ac8" stroke-width=".7"/><path d="M794 284h4l-2 2.500z" fill="#556"/><rect x="805.500" y="286.500" width="13" height="11" fill="#f4f4f4" stroke="#667"/><path d="M808 290h8M808 292.500h8M808 295h8" stroke="#4a8a4a" stroke-width="1"/><path d="M826 286.500h14M828 289.500h10M830 292.500h6M828 295.500h10M830 298.500h6" stroke="#445" stroke-width="1.600"/><text x="846" y="296" font-size="7.500" class="tbi" style="fill:#9aa0b4">PRE</text><path d="M874 288h9M874 292.500h9M874 297h9" stroke="#445" stroke-width="1.300"/><circle cx="870.500" cy="288" r="1.200" fill="#2a5ac8"/><circle cx="870.500" cy="292.500" r="1.200" fill="#2a5ac8"/><circle cx="870.500" cy="297" r="1.200" fill="#2a5ac8"/><path d="M879 284h4l-2 2.500z" fill="#556"/><path d="M889.0 283.0V301.0" stroke="#8d93ad" stroke-width="1"/><path d="M890.0 283.0V301.0" stroke="#f4f6ff" stroke-width="1"/><path d="M896.500 285.500h11v13h-11" fill="#fff" stroke="#556" stroke-width="1"/><text x="897.500" y="297" font-size="12" class="tbi" style="fill:#c02020">A</text><text x="916" y="297" font-size="12" class="tbi" style="fill:#6a7288">div</text><text x="938" y="297" font-size="11.500" class="tbi" style="fill:#6a7288">SP</text><path d="M958.0 283.0V301.0" stroke="#8d93ad" stroke-width="1"/><path d="M959.0 283.0V301.0" stroke="#f4f6ff" stroke-width="1"/><path d="M965.500 286h9l-1.500 12h-9z" fill="#fff" stroke="#5a78c0" stroke-width="1"/><path d="M968 299l8-9 1.500 1.500-8 9z" fill="#f0b030"/><path d="M986 292l3 4 4-7" stroke="#2a9a2a" stroke-width="2.400" fill="none"/><path d="M991 297l7-8" stroke="#d03030" stroke-width="2.200"/><rect x="1007.500" y="285.500" width="13" height="13" fill="#333c58" stroke="#222"/><rect x="1010" y="287" width="8" height="4.500" fill="#e09050"/><rect x="1010" y="293" width="8" height="4.500" fill="#5a9ad8"/><path d="M1033 296v-9l6-1.500v8.500" stroke="#2a7ad8" stroke-width="1.600" fill="none"/><ellipse cx="1031.500" cy="296.500" rx="2.300" ry="1.800" fill="#2a7ad8"/><ellipse cx="1037.500" cy="294.500" rx="2.300" ry="1.800" fill="#2a7ad8"/><path d="M1049.0 283.0V301.0" stroke="#8d93ad" stroke-width="1"/><path d="M1050.0 283.0V301.0" stroke="#f4f6ff" stroke-width="1"/><rect x="1054.500" y="286.500" width="14" height="11" fill="#eef2fb" stroke="#5a6a98"/><rect x="1054.500" y="286.500" width="14" height="2.500" fill="#4a78d0"/><path d="M1057 292h9M1057 295h9" stroke="#8a9ac0" stroke-width="1"/><rect x="1076.500" y="285.500" width="13" height="13" fill="#f4e8a0" stroke="#887"/><path d="M1079 289h3M1079 292h3M1079 295h3M1084 289h3M1084 292h3M1084 295h3" stroke="#554" stroke-width="1.100"/><path d="M1088 284h4l-2 2.500z" fill="#556"/><path d="M1096.0 283.0V301.0" stroke="#8d93ad" stroke-width="1"/><path d="M1097.0 283.0V301.0" stroke="#f4f6ff" stroke-width="1"/><rect x="1103" y="286" width="6" height="6" fill="#e04030"/><rect x="1110" y="286" width="6" height="6" fill="#40a040"/><rect x="1103" y="293" width="6" height="6" fill="#3060d0"/><rect x="1110" y="293" width="6" height="6" fill="#e8b020"/><path d="M1112 295v5l1.500-1.500 1.500 2.500" stroke="#000" stroke-width=".9" fill="#fff"/></svg>
<div class="abs" style="left:431px;top:304px;width:751px;height:23px;background:#fcfcfd"></div><div class="abs" style="left:431px;top:326.200px;width:751px;height:2px;background:#9c9c9c"></div><svg class="abs" style="left:433px;top:307px" width="16" height="17" viewBox="0 0 16 17"><path d="M1.500 2.500h9v13h-9z" fill="#f4e27a" stroke="#d8c040" stroke-width=".8"/><path d="M10.500 4.500h2.500v11h-2.500z" fill="#e4cc60"/></svg><div class="abs" style="left:453.5px;top:305px;width:1px;height:21px;background:#e2e2e6"></div><div class="abs" style="left:533.5px;top:305px;width:1px;height:21px;background:#e2e2e6"></div><div class="abs" style="left:613.5px;top:305px;width:1px;height:21px;background:#e2e2e6"></div><div class="abs" style="left:693.5px;top:305px;width:1px;height:21px;background:#e2e2e6"></div><div class="abs" style="left:773.5px;top:305px;width:1px;height:21px;background:#e2e2e6"></div><div class="abs" style="left:853.5px;top:305px;width:1px;height:21px;background:#e2e2e6"></div><div class="abs" style="left:933.5px;top:305px;width:1px;height:21px;background:#e2e2e6"></div><div class="abs" style="left:1013.5px;top:305px;width:1px;height:21px;background:#e2e2e6"></div><div class="abs" style="left:1093.5px;top:305px;width:1px;height:21px;background:#e2e2e6"></div><div class="abs" style="left:1173.5px;top:305px;width:1px;height:21px;background:#e2e2e6"></div><svg class="abs" style="left:458.5px;top:311px" width="9" height="9" viewBox="0 0 9 9"><path d="M4.500 .5l4 4-4 4-4-4z" fill="#2e86b8" stroke="#1a4a68" stroke-width=".8"/><path d="M4.500 2l2.500 2.500h-5z" fill="#9ad8f0"/></svg><div class="ptab" style="left:470.8px;letter-spacing:-0.632px">pom.xml</div><svg class="abs" style="left:520.0px;top:309.500px" width="12" height="12" viewBox="0 0 12 12"><path d="M2 2l8 8M10 2l-8 8" stroke="#f2bcc3" stroke-width="2.800"/><path d="M3 3l6 6M9 3l-6 6" stroke="#e99aa4" stroke-width="1.200"/></svg><svg class="abs" style="left:539.5px;top:311px" width="9" height="9" viewBox="0 0 9 9"><path d="M4.500 .5l4 4-4 4-4-4z" fill="#2e86b8" stroke="#1a4a68" stroke-width=".8"/><path d="M4.500 2l2.500 2.500h-5z" fill="#9ad8f0"/></svg><div class="ptab" style="left:551.5px;letter-spacing:-0.612px">web.xml</div><svg class="abs" style="left:600.0px;top:309.500px" width="12" height="12" viewBox="0 0 12 12"><path d="M2 2l8 8M10 2l-8 8" stroke="#f2bcc3" stroke-width="2.800"/><path d="M3 3l6 6M9 3l-6 6" stroke="#e99aa4" stroke-width="1.200"/></svg><svg class="abs" style="left:619.0px;top:311px" width="9" height="9" viewBox="0 0 9 9"><path d="M4.500 .5l4 4-4 4-4-4z" fill="#2e86b8" stroke="#1a4a68" stroke-width=".8"/><path d="M4.500 2l2.500 2.500h-5z" fill="#9ad8f0"/></svg><div class="ptab" style="left:630.5px;letter-spacing:-0.839px">user1.sql</div><svg class="abs" style="left:680.0px;top:309.500px" width="12" height="12" viewBox="0 0 12 12"><path d="M2 2l8 8M10 2l-8 8" stroke="#f2bcc3" stroke-width="2.800"/><path d="M3 3l6 6M9 3l-6 6" stroke="#e99aa4" stroke-width="1.200"/></svg><svg class="abs" style="left:698.5px;top:311px" width="9" height="9" viewBox="0 0 9 9"><path d="M4.500 .5l4 4-4 4-4-4z" fill="#2e86b8" stroke="#1a4a68" stroke-width=".8"/><path d="M4.500 2l2.500 2.500h-5z" fill="#9ad8f0"/></svg><div class="ptab" style="left:709.5px;letter-spacing:-0.800px">User.java</div><svg class="abs" style="left:760.0px;top:309.500px" width="12" height="12" viewBox="0 0 12 12"><path d="M2 2l8 8M10 2l-8 8" stroke="#f2bcc3" stroke-width="2.800"/><path d="M3 3l6 6M9 3l-6 6" stroke="#e99aa4" stroke-width="1.200"/></svg><svg class="abs" style="left:774.5px;top:311px" width="9" height="9" viewBox="0 0 9 9"><path d="M4.500 .5l4 4-4 4-4-4z" fill="#2e86b8" stroke="#1a4a68" stroke-width=".8"/><path d="M4.500 2l2.500 2.500h-5z" fill="#9ad8f0"/></svg><div class="ptab" style="left:785.5px;width:59.5px;overflow:hidden;letter-spacing:-0.269px">applicationContext.xml</div><svg class="abs" style="left:842.0px;top:309.500px" width="12" height="12" viewBox="0 0 12 12"><path d="M2 2l8 8M10 2l-8 8" stroke="#f2bcc3" stroke-width="2.800"/><path d="M3 3l6 6M9 3l-6 6" stroke="#e99aa4" stroke-width="1.200"/></svg><svg class="abs" style="left:855.0px;top:311px" width="9" height="9" viewBox="0 0 9 9"><path d="M4.500 .5l4 4-4 4-4-4z" fill="#2e86b8" stroke="#1a4a68" stroke-width=".8"/><path d="M4.500 2l2.500 2.500h-5z" fill="#9ad8f0"/></svg><div class="ptab" style="left:865.5px;width:56.0px;overflow:hidden;letter-spacing:-0.714px">mvc3-servlet.xml</div><svg class="abs" style="left:920.0px;top:309.500px" width="12" height="12" viewBox="0 0 12 12"><path d="M2 2l8 8M10 2l-8 8" stroke="#f2bcc3" stroke-width="2.800"/><path d="M3 3l6 6M9 3l-6 6" stroke="#e99aa4" stroke-width="1.200"/></svg><svg class="abs" style="left:939.0px;top:311px" width="9" height="9" viewBox="0 0 9 9"><path d="M4.500 .5l4 4-4 4-4-4z" fill="#2e86b8" stroke="#1a4a68" stroke-width=".8"/><path d="M4.500 2l2.500 2.500h-5z" fill="#9ad8f0"/></svg><div class="ptab" style="left:950.8px;letter-spacing:-0.601px">index.jsp</div><svg class="abs" style="left:1000.0px;top:309.500px" width="12" height="12" viewBox="0 0 12 12"><path d="M2 2l8 8M10 2l-8 8" stroke="#f2bcc3" stroke-width="2.800"/><path d="M3 3l6 6M9 3l-6 6" stroke="#e99aa4" stroke-width="1.200"/></svg><svg class="abs" style="left:1014.0px;top:311px" width="9" height="9" viewBox="0 0 9 9"><path d="M4.500 .5l4 4-4 4-4-4z" fill="#2e86b8" stroke="#1a4a68" stroke-width=".8"/><path d="M4.500 2l2.500 2.500h-5z" fill="#9ad8f0"/></svg><div class="ptab" style="left:1025.9px;width:57.1px;overflow:hidden;letter-spacing:-0.272px">UserController.java</div><svg class="abs" style="left:1081.0px;top:309.500px" width="12" height="12" viewBox="0 0 12 12"><path d="M2 2l8 8M10 2l-8 8" stroke="#f2bcc3" stroke-width="2.800"/><path d="M3 3l6 6M9 3l-6 6" stroke="#e99aa4" stroke-width="1.200"/></svg><svg class="abs" style="left:1099.0px;top:311px" width="9" height="9" viewBox="0 0 9 9"><path d="M4.500 .5l4 4-4 4-4-4z" fill="#2e86b8" stroke="#1a4a68" stroke-width=".8"/><path d="M4.500 2l2.500 2.500h-5z" fill="#9ad8f0"/></svg><div class="ptab" style="left:1110.5px;letter-spacing:-0.583px">insert.jsp</div><svg class="abs" style="left:1160.0px;top:309.500px" width="12" height="12" viewBox="0 0 12 12"><path d="M2 2l8 8M10 2l-8 8" stroke="#f2bcc3" stroke-width="2.800"/><path d="M3 3l6 6M9 3l-6 6" stroke="#e99aa4" stroke-width="1.200"/></svg><svg class="abs" style="left:1172.0px;top:311px" width="9" height="9" viewBox="0 0 9 9"><path d="M4.500 .5l4 4-4 4-4-4z" fill="#2e86b8" stroke="#1a4a68" stroke-width=".8"/><path d="M4.500 2l2.500 2.500h-5z" fill="#9ad8f0"/></svg>
<div class="abs" style="left:431px;top:328px;width:751px;height:24px;background:#fdfdff"></div><div class="abs" style="left:482.700px;top:328px;width:1.200px;height:24px;background:#1c1c70"></div><div class="abs" style="left:431px;top:351.500px;width:751px;height:1.300px;background:#333"></div><div class="abs" style="left:484px;top:330px;font-family:'Liberation Mono',monospace;font-size:19.170px;line-height:23px;color:#3434a8;white-space:pre;letter-spacing:0"><span class="rul">----+----<b>1</b>----+----<b>2</b>----+----<b>3</b>----+----<b>4</b>----+----<b>5</b>----+----<b>6</b>----+----<b>7</b></span></div>
<div class="pcode" style="top:355.00px"><span class="j">&lt;%@ page language=</span><span class="s">"java"</span><span class="j"> contentType=</span><span class="s">"text/html; charset=UTF-8"</span></div><div class="pln" style="top:355.00px">1</div><div class="pcode" style="top:379.59px"><span class="j">pageEncoding=</span><span class="s">"UTF-8"</span><span class="j">%&gt;</span></div><div class="abs" style="left:484px;top:403.9px;width:700px;height:24.500px;background:#0078d7"></div><div class="pcode sel" style="top:404.18px">&lt;%@ taglib prefix="c" uri="http<span>://</span>java.sun.com/jsp/jstl/core" %&gt;</div><svg class="abs" style="left:435px;top:410.7px" width="6" height="10" viewBox="0 0 6 10"><path d="M0 0l5.500 5-5.500 5z" fill="#000080"/></svg><div class="pln" style="top:404.18px">2</div><div class="pcode" style="top:428.77px"><span class="t">&lt;!DOCTYPE </span><span class="p">html</span><span class="t">&gt;</span></div><div class="pln" style="top:428.77px">3</div><div class="pcode" style="top:453.36px"><span class="t">&lt;html&gt;</span></div><div class="pln" style="top:453.36px">4</div><div class="pcode" style="top:477.95px"><span class="t">&lt;head&gt;</span></div><div class="pln" style="top:477.95px">5</div><div class="pcode" style="top:502.54px"><span class="t">&lt;meta </span><span class="r">charset=</span><span class="s">"UTF-8"</span><span class="t">&gt;</span></div><div class="pln" style="top:502.54px">6</div><div class="pcode" style="top:527.13px"><span class="t">&lt;title&gt;</span>Insert title here<span class="t">&lt;/title&gt;</span></div><div class="pln" style="top:527.13px">7</div><div class="pcode" style="top:551.72px"><span class="t">&lt;/head&gt;</span></div><div class="pln" style="top:551.72px">8</div><div class="pcode" style="top:576.31px"><span class="t">&lt;body&gt;</span></div><div class="pln" style="top:576.31px">9</div><div class="pcode" style="top:600.90px"><span class="t">&lt;</span><span class="o">c:if</span> <span class="p">test=</span><span class="s">"${!empty list}"</span><span class="t">&gt;</span></div><div class="pln" style="top:600.90px">10</div><div class="pcode" style="top:625.49px"><span class="t">&lt;table </span><span class="r">border=</span><span class="s">"1"</span><span class="t">&gt;</span></div><div class="pln" style="top:625.49px">11</div><svg class="abs" style="left:469px;top:633.5px" width="8" height="8" viewBox="0 0 8 8"><rect x=".5" y=".5" width="7" height="7" fill="#fff" stroke="#a0a0a0" stroke-width=".9"/><path d="M2 4h4" stroke="#888" stroke-width=".9"/></svg><div class="pcode" style="top:650.08px">        <span class="t">&lt;tr&gt;</span></div><div class="pln" style="top:650.08px">12</div><svg class="abs" style="left:469px;top:658.1px" width="8" height="8" viewBox="0 0 8 8"><rect x=".5" y=".5" width="7" height="7" fill="#fff" stroke="#a0a0a0" stroke-width=".9"/><path d="M2 4h4" stroke="#888" stroke-width=".9"/></svg><div class="pcode" style="top:674.67px">            <span class="t">&lt;td&gt;</span><i>이름</i><span class="t">&lt;/td&gt;</span></div><div class="pln" style="top:674.67px">13</div><div class="pcode" style="top:699.26px">            <span class="t">&lt;td&gt;</span><i>나이</i><span class="t">&lt;/td&gt;</span></div><div class="pln" style="top:699.26px">14</div><div class="pcode" style="top:723.85px">            <span class="t">&lt;td&gt;</span><i>취미</i><span class="t">&lt;/td&gt;</span></div><div class="pln" style="top:723.85px">15</div><div class="pcode" style="top:748.44px">        <span class="t">&lt;/tr&gt;</span></div><div class="pln" style="top:748.44px">16</div><div class="pcode" style="top:773.03px">        <span class="t">&lt;</span><span class="o">c:forEach</span> <span class="p">items=</span><span class="s">"${list}"</span>   <span class="p">var=</span><span class="s">"ob"</span><span class="t">&gt;</span></div><div class="pln" style="top:773.03px">17</div><svg class="abs" style="left:469px;top:781.0px" width="8" height="8" viewBox="0 0 8 8"><rect x=".5" y=".5" width="7" height="7" fill="#fff" stroke="#a0a0a0" stroke-width=".9"/><path d="M2 4h4" stroke="#888" stroke-width=".9"/></svg><div class="pcode" style="top:797.62px">                <span class="t">&lt;tr&gt;</span></div><div class="pln" style="top:797.62px">18</div><svg class="abs" style="left:469px;top:805.6px" width="8" height="8" viewBox="0 0 8 8"><rect x=".5" y=".5" width="7" height="7" fill="#fff" stroke="#a0a0a0" stroke-width=".9"/><path d="M2 4h4" stroke="#888" stroke-width=".9"/></svg><div class="pcode" style="top:822.21px">                    <span class="t">&lt;td&gt;</span>${ob.name}<span class="t">&lt;/td&gt;</span> <span class="g">&lt;!-- getter<i>가</i> <i>있어야</i> <i>함</i> --&gt;</span></div><div class="pln" style="top:822.21px">19</div><div class="pcode" style="top:846.80px">                    <span class="t">&lt;td&gt;</span>${ob.age}<span class="t">&lt;/td&gt;</span></div><div class="pln" style="top:846.80px">20</div><div class="pcode" style="top:871.39px">                    <span class="t">&lt;td&gt;</span>${ob.hobby }<span class="t">&lt;/td&gt;</span></div><div class="pln" style="top:871.39px">21</div>
<svg class="abs" style="left:429px;top:353px;overflow:visible" width="753" height="533" viewBox="429 353 753 533" fill="none" stroke="#1b8a1b" stroke-width="2" stroke-linecap="round" stroke-linejoin="round"><path d="M694 401c-10 2-18 10-17 21s13 17 31 16s32-8 33-20s-14-20-31-20c-9 0-17 1-22 4"/><path d="M695 430c8 1.500 18 1 25 .5M697 434c9 2 20 1.500 29 0M700 437.500c8 1 17 .8 24-.5"/><path d="M527 601c-8 1-13 6-12 12s6 9 15 8s19-4 19-11s-8-10-17-10c-3 0-6 .5-8 1.500"/><path d="M497 622c10 1.500 22 1.500 33 .5M519 625.500c8 1 17 .5 24-1"/><path d="M606 769c-5 9-4 20 3 27s19 12 32 11s40-9 55-17s14-23 2-28s-28-6-42-5s-36 3-48 8"/><path d="M588 797c7 1 14 1 21 .5M643 798c10 0 20-1 29-2"/><path d="M920 497c.5 36 1.500 74 3 109"/><path d="M921 526.500h18"/><path d="M923.500 590l1.500 17" stroke-width="2.600"/><path d="M742 546l3.500 1 14 14-2.500 2.500-14-14z" fill="#fff" stroke="#333" stroke-width=".8"/><path d="M742 546l1 3.500 2.500-2.500z" fill="#1b8a1b" stroke="#1b8a1b" stroke-width=".6"/></svg><svg class="abs" style="left:429px;top:353px;overflow:visible" width="753" height="533" viewBox="429 353 753 533"><g font-family="DejaVu Sans, Liberation Sans, sans-serif" font-weight="200" font-style="italic" fill="#1b8a1b" stroke="#1b8a1b" stroke-width=".55"><text x="888.500" y="489.400" font-size="46" font-style="normal">l</text><text x="909.300" y="487.500" font-size="44" font-style="normal">ī</text><text x="0" y="0" font-size="43" transform="translate(925.500 486) scale(.7 1) rotate(-3)">b</text><text x="0" y="0" font-size="27" textLength="199" lengthAdjust="spacing" transform="translate(946 533) rotate(-5.300)">standard-jar</text><text x="0" y="0" font-size="27" textLength="135" lengthAdjust="spacing" transform="translate(965 577) rotate(-5.500)">jstl.jar</text></g></svg>
</div></div>
<div id="pen"><div class="abs" style="left:3px;top:2px;width:9.500px;height:240px;background:#000"></div><div class="v" style="top:10.0px">S</div><div class="v" style="top:21.0px">C</div><div class="v" style="top:32.0px">R</div><div class="v" style="top:43.0px">E</div><div class="v" style="top:54.0px">E</div><div class="v" style="top:65.0px">N</div><div class="v" style="top:87.0px">P</div><div class="v" style="top:98.0px">E</div><div class="v" style="top:109.0px">N</div><div class="abs" style="left:3px;top:158px;width:9.500px;height:84px"><div style="position:absolute;left:9.800px;top:0;transform-origin:0 0;transform:rotate(90deg);font-family:'Liberation Serif',serif;font-weight:bold;font-size:9.500px;line-height:10px;color:#ffff00;white-space:nowrap;letter-spacing:-0.500px">HTTP<span>://</span>DOLBA.NET</div></div><div class="sec" style="top:1.500px;height:17px"></div><div class="sec" style="top:20px;height:61px"></div><div class="sec" style="top:83px;height:41px"></div><div class="sec" style="top:125px;height:77px"></div><div class="sec" style="top:204px;height:39px"></div><svg class="abs" style="left:0;top:0" width="68" height="300" viewBox="33.500 586 68 300"><rect x="52" y="589.500" width="19" height="13.500" fill="#fafafa"/><rect x="52" y="609" width="19" height="13.500" fill="#fafafa"/><rect x="52" y="672" width="19" height="14" fill="#fafafa"/><g transform="translate(57.0 602.0) scale(1.00)"><path d="M0 0l1.200-3.200 6.500-6.500 2 2-6.500 6.500z" fill="#f0a030" stroke="#6a4a20" stroke-width=".5"/><path d="M0 0l1.200-3.200 2 2z" fill="#f6dcb0" stroke="#6a4a20" stroke-width=".4"/><path d="M7.700-9.700l1-1 2 2-1 1z" fill="#e04040" stroke="#6a2a20" stroke-width=".4"/></g><rect x="82" y="590.500" width="4.500" height="9" rx="2" fill="#f0a030" stroke="#6a3a10" stroke-width=".6"/><path d="M82.500 599.500l1.800 3 1.800-3z" fill="#f6dcb0" stroke="#6a3a10" stroke-width=".4"/><path d="M89.500 590v11" stroke="#333" stroke-width="1" stroke-dasharray="1 1"/><g transform="translate(62.0 620.0) scale(0.75)"><path d="M0 0l1.200-3.200 6.500-6.500 2 2-6.500 6.500z" fill="#f0a030" stroke="#6a4a20" stroke-width=".5"/><path d="M0 0l1.200-3.200 2 2z" fill="#f6dcb0" stroke="#6a4a20" stroke-width=".4"/><path d="M7.700-9.700l1-1 2 2-1 1z" fill="#e04040" stroke="#6a2a20" stroke-width=".4"/></g><path d="M58 618c-1.500 2 1 3 2.500 2.500s2.500 1.500 6 1" stroke="#2020e0" stroke-width=".9" fill="none"/><g transform="translate(86.0 617.0) scale(0.75)"><path d="M0 0l1.200-3.200 6.500-6.500 2 2-6.500 6.500z" fill="#f0a030" stroke="#6a4a20" stroke-width=".5"/><path d="M0 0l1.200-3.200 2 2z" fill="#f6dcb0" stroke="#6a4a20" stroke-width=".4"/><path d="M7.700-9.700l1-1 2 2-1 1z" fill="#e04040" stroke="#6a2a20" stroke-width=".4"/></g><path d="M81 619.500h10.500" stroke="#2020e0" stroke-width=".9"/><g transform="translate(62.0 640.0) scale(0.75)"><path d="M0 0l1.200-3.200 6.500-6.500 2 2-6.500 6.500z" fill="#f0a030" stroke="#6a4a20" stroke-width=".5"/><path d="M0 0l1.200-3.200 2 2z" fill="#f6dcb0" stroke="#6a4a20" stroke-width=".4"/><path d="M7.700-9.700l1-1 2 2-1 1z" fill="#e04040" stroke="#6a2a20" stroke-width=".4"/></g><ellipse cx="61.500" cy="640.500" rx="5" ry="2.300" fill="none" stroke="#2020e0" stroke-width=".9"/><g transform="translate(86.0 639.0) scale(0.75)"><path d="M0 0l1.200-3.200 6.500-6.500 2 2-6.500 6.500z" fill="#f0a030" stroke="#6a4a20" stroke-width=".5"/><path d="M0 0l1.200-3.200 2 2z" fill="#f6dcb0" stroke="#6a4a20" stroke-width=".4"/><path d="M7.700-9.700l1-1 2 2-1 1z" fill="#e04040" stroke="#6a2a20" stroke-width=".4"/></g><rect x="81.500" y="638.500" width="10" height="4" rx="1" fill="none" stroke="#2020e0" stroke-width=".9"/><g transform="translate(62.0 659.0) scale(0.75)"><path d="M0 0l1.200-3.200 6.500-6.500 2 2-6.500 6.500z" fill="#f0a030" stroke="#6a4a20" stroke-width=".5"/><path d="M0 0l1.200-3.200 2 2z" fill="#f6dcb0" stroke="#6a4a20" stroke-width=".4"/><path d="M7.700-9.700l1-1 2 2-1 1z" fill="#e04040" stroke="#6a2a20" stroke-width=".4"/></g><ellipse cx="61.500" cy="660.500" rx="5.500" ry="2.600" fill="#0000ff"/><g transform="translate(86.0 659.0) scale(0.75)"><path d="M0 0l1.200-3.200 6.500-6.500 2 2-6.500 6.500z" fill="#f0a030" stroke="#6a4a20" stroke-width=".5"/><path d="M0 0l1.200-3.200 2 2z" fill="#f6dcb0" stroke="#6a4a20" stroke-width=".4"/><path d="M7.700-9.700l1-1 2 2-1 1z" fill="#e04040" stroke="#6a2a20" stroke-width=".4"/></g><rect x="81" y="658.500" width="11" height="4.500" rx="1.500" fill="#0000ff"/><g transform="translate(57.0 685.0) scale(1.00)"><path d="M0 0l1.200-3.200 6.500-6.500 2 2-6.500 6.500z" fill="#f0a030" stroke="#6a4a20" stroke-width=".5"/><path d="M0 0l1.200-3.200 2 2z" fill="#f6dcb0" stroke="#6a4a20" stroke-width=".4"/><path d="M7.700-9.700l1-1 2 2-1 1z" fill="#e04040" stroke="#6a2a20" stroke-width=".4"/></g><rect x="80" y="680" width="12" height="5.500" fill="#58d058"/><g transform="translate(81.0 685.0) scale(1.00)"><path d="M0 0l1.200-3.200 6.500-6.500 2 2-6.500 6.500z" fill="#f0a030" stroke="#6a4a20" stroke-width=".5"/><path d="M0 0l1.200-3.200 2 2z" fill="#f6dcb0" stroke="#6a4a20" stroke-width=".4"/><path d="M7.700-9.700l1-1 2 2-1 1z" fill="#e04040" stroke="#6a2a20" stroke-width=".4"/></g><path d="M57 700l5-4.500h5l-5 4.500z" fill="#f4f4f4" stroke="#6a5a40" stroke-width=".6"/><path d="M57 700v1.200h5l5-4.500v-1.200" fill="#e0c8a0" stroke="#6a5a40" stroke-width=".5"/><rect x="49.5" y="713.0" width="13.500" height="13.500" fill="#ff0000" stroke="#d8d8dc" stroke-width=".8"/><rect x="65.5" y="713.0" width="13.500" height="13.500" fill="#ffff00" stroke="#d8d8dc" stroke-width=".8"/><rect x="81.5" y="713.0" width="13.500" height="13.500" fill="#0000ff" stroke="#d8d8dc" stroke-width=".8"/><rect x="49.5" y="730.0" width="13.500" height="13.500" fill="#008000" stroke="#d8d8dc" stroke-width=".8"/><rect x="65.5" y="730.0" width="13.500" height="13.500" fill="#000000" stroke="#d8d8dc" stroke-width=".8"/><rect x="81.5" y="730.0" width="13.500" height="13.500" fill="#ffffff" stroke="#d8d8dc" stroke-width=".8"/><defs><linearGradient id="sp" x1="0" x2="1" y1="0" y2="0"><stop offset="0" stop-color="#ff2020"/><stop offset=".17" stop-color="#f0f020"/><stop offset=".38" stop-color="#20e020"/><stop offset=".55" stop-color="#20d0d0"/><stop offset=".72" stop-color="#2030f0"/><stop offset=".88" stop-color="#e020e0"/><stop offset="1" stop-color="#f02060"/></linearGradient><linearGradient id="sg" x1="0" x2="0" y1="0" y2="1"><stop offset="0" stop-color="#808080" stop-opacity="0"/><stop offset="1" stop-color="#808080" stop-opacity="1"/></linearGradient></defs><rect x="50" y="747" width="46" height="38" fill="url(#sp)"/><rect x="50" y="747" width="46" height="38" fill="url(#sg)"/><rect x="49.500" y="746.500" width="47" height="39" fill="none" stroke="#c8c8cc" stroke-width=".8"/><path d="M54 793.500h40M54 806.500h40" stroke="#555" stroke-width="2" stroke-dasharray=".8 2.500"/><path d="M54 801h40" stroke="#9a9a9a" stroke-width="1"/><rect x="55" y="797.500" width="2" height="6" fill="#f8f8f8" stroke="#777" stroke-width=".6"/><rect x="37" y="832.500" width="60" height="13.500" fill="#fff" stroke="#8a8a92" stroke-width="1"/><rect x="85" y="833.500" width="11" height="11.500" fill="#eeeef2" stroke="#c4c4cc" stroke-width=".6"/><path d="M88 838h5l-2.500 3z" fill="#666"/><rect x="35.500" y="849.500" width="64" height="35" fill="#f4f3f5" stroke="#d0d0d6" stroke-width="1"/></svg><div class="tiny" style="left:14px;width:52px;top:229px;font-size:8px;letter-spacing:.2px">3 Pixel</div><div class="abs nw" style="left:5px;top:246px;font-family:'Noto Sans CJK KR',sans-serif;font-size:9.500px;line-height:13px;color:#8a8a8a">굴림체</div><div class="tiny" style="left:2px;width:64px;top:268px;font-size:6.500px">964, 421</div><div class="tiny" style="left:2px;width:64px;top:285px;font-size:6.500px">No Info</div></div></div></div>
<div id="side">
  <svg class="abs" style="left:19px;top:20px" width="10" height="7" viewBox="0 0 10 7"><path d="M1.200 1.500L5 5.300L8.800 1.500" stroke="#555" stroke-width="1.400" fill="none"/></svg>
  <div class="hd" style="top:13px">참가자(33)</div>
  <div class="seg"><div class="on"></div><span style="left:0;color:#555">토론자(6)</span><span style="left:138px;color:#0e71eb">참석자(27)</span></div>
  <div class="srch"><svg class="abs" style="left:10px;top:8px" width="14" height="14" viewBox="0 0 14 14"><circle cx="5.800" cy="5.800" r="4.300" stroke="#555" stroke-width="1.100" fill="none"/><path d="M9 9L12.800 12.800" stroke="#555" stroke-width="1.200"/></svg><div class="abs" style="left:27px;top:5px;font-size:13px;line-height:18px;color:#777;letter-spacing:.5px">검색</div></div>
  <div class="abs" style="left:310px;top:129px;width:8px;height:292px;background:#f2f2f7;border-radius:4px"></div>
  <div class="abs" style="left:310px;top:329px;width:8px;height:92px;background:#adadb8;border-radius:4px"></div>
  <div class="av" style="top:141px;background:#f39c12">임</div>
  <div class="av" style="top:182px;background:#d35400">장</div>
  <div class="av" style="top:223px;background:#34495e">전</div>
  <div class="av" style="top:264px;background:#27ae60">조</div>
  <div class="av" style="top:305px;background:#f39c12">지</div>
  <div class="av" style="top:346px;background:#16a085">최</div>
  <div class="av" style="top:387px;background:#27ae60">최</div>
  <div class="abs nw" style="left:114px;top:439px;width:93px;height:22px;background:#f2f2f7;border-radius:6px;text-align:center;font-size:13px;line-height:21px;color:#babacc">모든 손 내리기</div>
  <div class="abs" style="left:21px;top:476px;width:299px;height:1px;background:#ededf2"></div>
  <svg class="abs" style="left:19px;top:495px" width="10" height="7" viewBox="0 0 10 7"><path d="M1.200 1.500L5 5.300L8.800 1.500" stroke="#555" stroke-width="1.400" fill="none"/></svg>
  <div class="hd" style="top:488px;letter-spacing:1px">채팅</div>
  <div class="abs" id="chat" style="left:0;top:521px;width:320px;height:337px;overflow:hidden">
    <div class="chat h" style="top:-11.2px">나로부터 에게 <b>모든 토론자 및 참석자:</b></div>
    <div class="chat " style="top:11.9px"><i>못따라오신분들은 코드 드렸으니 복붙하</i></div>
    <div class="chat " style="top:36.8px"><i>셔도 되십니다</i>!!!</div>
    <div class="chat h" style="top:69.0px">나로부터 에게 <b>모든 토론자 및 참석자:</b></div>
    <div class="chat " style="top:92.5px">web.xml<i>확인</i> -&gt; <i>데이터베이스 만들었는</i></div>
    <div class="chat " style="top:117.4px"><i>지 확인</i> -&gt;Entity <i>생성</i>-&gt;applictan<i>에서 각</i></div>
    <div class="chat " style="top:141.5px"><i>종정보 수집</i></div>
    <div class="chat " style="top:166.4px">10<i>분 휴식후 수업재개하겠습니다</i></div>
    <div class="chat " style="top:191.9px"><i>이번시간에 따라오지 못하셨다면 드린</i></div>
    <div class="chat " style="top:216.5px"><i>코드 복붙하시기 바랍니다</i>!!</div>
    <div class="chat h" style="top:249.0px">나로부터 에게 <b>모든 토론자 및 참석자:</b></div>
    <div class="chat " style="top:273.2px">list.do <i>또한</i> UserDao<i>를 거쳐서</i> list.jsp<i>로</i></div>
    <div class="chat " style="top:296.6px"><i>나오게 됩니다</i>!!</div>
    <div class="abs" style="left:310px;top:1px;width:8px;height:336px;background:#f2f2f7;border-radius:4px"></div>
    <div class="abs" style="left:310px;top:200px;width:8px;height:135px;background:#adadb8;border-radius:4px"></div>
  </div>
  <div class="abs" style="left:0;top:858px;width:320px;height:1px;background:#e4e4ed"></div>
  <div class="abs nw" style="left:18px;top:872px;font-size:13px;line-height:18px;color:#232333">받는 사람:</div>
  <div class="abs" style="left:80px;top:871px;width:135px;height:22px;background:#f2f2f7;border-radius:6px"><div class="abs nw" style="left:8px;top:2px;font-size:12px;line-height:17px;color:#232333">모든 토론자 및 참석자</div><svg class="abs" style="left:119px;top:8px" width="9" height="6" viewBox="0 0 9 6"><path d="M1 1L4.500 4.500L8 1" stroke="#232333" stroke-width="1.400" fill="none"/></svg></div>
  <div class="abs" style="left:281px;top:870px;width:24px;height:24px;border:1px solid #dcdce8;border-radius:6px"><svg class="abs" style="left:6px;top:10px" width="10" height="3" viewBox="0 0 10 3"><circle cx="1.200" cy="1.500" r="1" fill="#555"/><circle cx="5" cy="1.500" r="1" fill="#555"/><circle cx="8.800" cy="1.500" r="1" fill="#555"/></svg></div>
  <div class="abs nw" style="left:18px;top:899px;font-size:13px;line-height:18px;color:#747487;letter-spacing:.4px">여기에 메시지 입력...</div>
</div>
<div id="bt"></div><div id="bl"></div><div id="br"></div><div id="bb"></div>
</div>
</body>
</html>
